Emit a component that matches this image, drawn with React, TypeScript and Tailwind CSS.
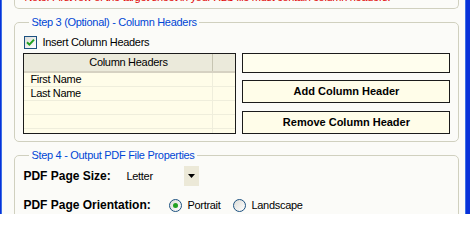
import React from "react";

const font = { fontFamily: '"Liberation Sans", Arial, sans-serif' };

const GroupBox = ({ title, className, children }: { title: string; className?: string; children?: React.ReactNode }) => (
  <fieldset className={`border border-[#d0d0bf] rounded-[5px] px-[8px] ${className ?? ""}`}>
    <legend className="ml-[6px] px-[2px] text-[11px] leading-[13px] tracking-[-0.3px] text-[#0046d5]">{title}</legend>
    {children}
  </fieldset>
);

const Radio = ({ checked }: { checked?: boolean }) => (
  <span className="w-[13px] h-[13px] rounded-full border border-[#1c5180] bg-gradient-to-br from-[#dcdcd7] to-white flex items-center justify-center">
    {checked && <span className="w-[5px] h-[5px] rounded-full bg-[#21a121]" />}
  </span>
);

export default function App() {
  const rows = ["First Name", "Last Name", "", "", ""];

  return (
    <div className="w-[470px] h-[214px] overflow-hidden flex bg-[#fbfbf8] text-black" style={font}>
      <div className="w-[3px] bg-[#0831d9] border-r border-[#3c6fe6]" />
      <div className="flex-1 pl-[12px] pr-[6px] flex flex-col">
        {/* note box, scrolled so only its last line shows */}
        <div className="h-[9px] shrink-0 border border-t-0 border-[#d0d0bf] rounded-b-[5px] overflow-hidden">
          <div className="-mt-[9px] pl-[9px] text-[11px] leading-[13px] tracking-[-0.3px] text-[#e00000] whitespace-nowrap">
            Note: First row of the target sheet in your XLS file must contain column headers.
          </div>
        </div>

        <GroupBox title="Step 3 (Optional) - Column Headers" className="mt-[7px] h-[126px] shrink-0">
          <label className="mt-[7px] flex items-center gap-[5px] text-[11px] leading-[13px] tracking-[-0.3px]">
            <span className="w-[13px] h-[13px] ml-[1px] border border-[#1c5180] bg-gradient-to-br from-[#dcdcd7] to-white flex items-center justify-center">
              <svg width="9" height="9" viewBox="0 0 9 9">
                <path d="M1 4.2 L3.4 6.6 L8 1.6" stroke="#21a121" strokeWidth="2" fill="none" />
              </svg>
            </span>
            Insert Column Headers
          </label>

          <div className="mt-[4px] flex gap-[6px]">
            <div className="w-[213px] h-[81px] border border-[#1b1b1b] bg-[#fffde9] text-[11px] tracking-[-0.3px] overflow-hidden">
              <div className="h-[19px] flex bg-[#ebeadb] border-b-[2px] border-[#d6d2c2]">
                <div className="w-[189px] border-r border-[#c7c5b2] flex items-center justify-center pl-[20px]">
                  Column Headers
                </div>
                <div className="flex-1" />
              </div>
              {rows.map((r, i) => (
                <div key={i} className="h-[14px] flex border-b border-[#efeedc]">
                  <div className="w-[189px] border-r border-[#efeedc] pl-[6px] leading-[13px]">{r}</div>
                  <div className="flex-1" />
                </div>
              ))}
            </div>

            <div className="w-[208px] flex flex-col">
              <div className="h-[20px] border border-[#1b1b1b] bg-[#fffeee]" />
              <button className="mt-[7px] h-[23px] border border-[#1b1b1b] bg-[#fffde9] text-[11px] font-bold">
                Add Column Header
              </button>
              <button className="mt-[8px] h-[23px] border border-[#1b1b1b] bg-[#fffde9] text-[11px] font-bold">
                Remove Column Header
              </button>
            </div>
          </div>
        </GroupBox>

        <GroupBox title="Step 4 - Output PDF File Properties" className="mt-[7px] h-[90px] shrink-0">
          <div className="mt-[4px] flex items-center h-[20px]">
            <span className="w-[103px] text-[12px] font-bold">PDF Page Size:</span>
            <span className="w-[58px] text-[11px] tracking-[-0.3px]">Letter</span>
            <span className="w-[15px] h-[20px] bg-[#ece9d8] flex items-center justify-center">
              <svg width="7" height="4" viewBox="0 0 7 4">
                <path d="M0 0 H7 L3.5 4 Z" fill="#000" />
              </svg>
            </span>
          </div>
          <div className="mt-[11px] flex items-center h-[16px]">
            <span className="w-[146px] text-[12px] font-bold">PDF Page Orientation:</span>
            <Radio checked />
            <span className="ml-[5px] text-[11px] tracking-[-0.3px]">Portrait</span>
            <span className="ml-[13px]"><Radio /></span>
            <span className="ml-[5px] text-[11px] tracking-[-0.3px]">Landscape</span>
          </div>
        </GroupBox>
      </div>
      <div className="w-[6px] bg-[#0831d9] border-l border-[#3c6fe6]" />
    </div>
  );
}
